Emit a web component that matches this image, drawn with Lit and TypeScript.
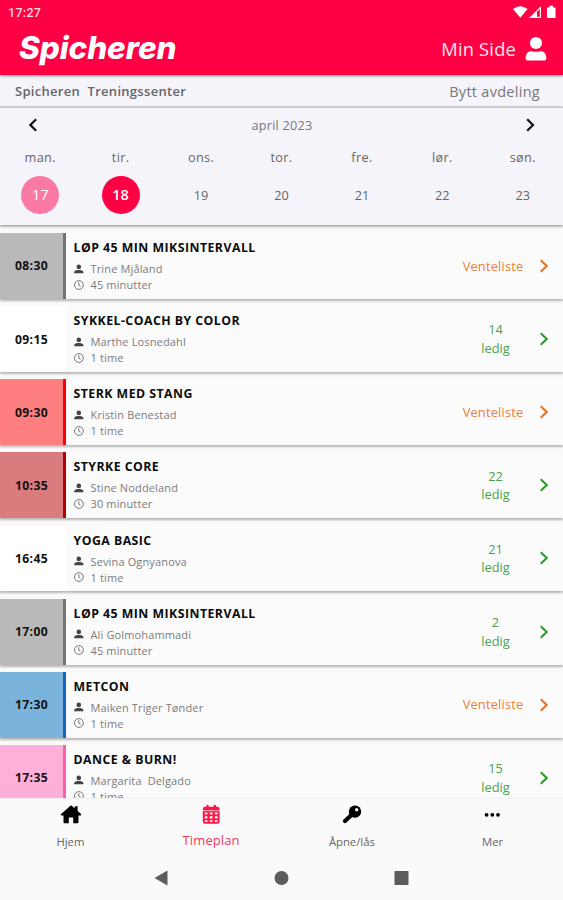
import { LitElement, html, css, svg } from "lit";
import { customElement, property } from "lit/decorators.js";
import { styleMap } from "lit/directives/style-map.js";

interface Session {
  time: string;
  title: string;
  trainer: string;
  length: string;
  free: number;
  fill: string;
  edge: string;
}

const SESSIONS: Session[] = [
  { time: "08:30", title: "LØP 45 MIN MIKSINTERVALL", trainer: "Trine Mjåland", length: "45 minutter", free: 0, fill: "#b9b9b9", edge: "#747474" },
  { time: "09:15", title: "SYKKEL-COACH BY COLOR", trainer: "Marthe Losnedahl", length: "1 time", free: 14, fill: "#ffffff", edge: "#ffffff" },
  { time: "09:30", title: "STERK MED STANG", trainer: "Kristin Benestad", length: "1 time", free: 0, fill: "#ff7f80", edge: "#fb0007" },
  { time: "10:35", title: "STYRKE CORE", trainer: "Stine Noddeland", length: "30 minutter", free: 22, fill: "#da7b7d", edge: "#b50006" },
  { time: "16:45", title: "YOGA BASIC", trainer: "Sevina Ognyanova", length: "1 time", free: 21, fill: "#ffffff", edge: "#ffffff" },
  { time: "17:00", title: "LØP 45 MIN MIKSINTERVALL", trainer: "Ali Golmohammadi", length: "45 minutter", free: 2, fill: "#b9b9b9", edge: "#747474" },
  { time: "17:30", title: "METCON", trainer: "Maiken Triger Tønder", length: "1 time", free: 0, fill: "#7ab4dc", edge: "#1565c0" },
  { time: "17:35", title: "DANCE & BURN!", trainer: "Margarita  Delgado", length: "1 time", free: 15, fill: "#ffafd8", edge: "#ff5cac" },
];

const DAYS = [
  ["man.", "17", "today"],
  ["tir.", "18", "selected"],
  ["ons.", "19", ""],
  ["tor.", "20", ""],
  ["fre.", "21", ""],
  ["lør.", "22", ""],
  ["søn.", "23", ""],
];

@customElement("session-row")
export class SessionRow extends LitElement {
  @property({ attribute: false }) session!: Session;

  static styles = css`
    :host {
      display: flex;
      height: 65.8px;
      flex: none;
      background: #fbfbfb;
      box-shadow: 0 1.5px 2px rgba(0, 0, 0, 0.27);
    }
    .time {
      box-sizing: border-box;
      width: 66px;
      border-right: 3.5px solid;
      display: flex;
      align-items: center;
      justify-content: center;
      font-size: 12.2px;
      font-weight: 700;
      color: #111;
      letter-spacing: 0.35px;
    }
    .info {
      flex: 1;
      padding: 6px 0 0 7.5px;
    }
    .title {
      font-size: 12.3px;
      line-height: 17px;
      font-weight: 700;
      color: #0c0c0c;
      letter-spacing: 0.47px;
    }
    .line {
      display: flex;
      align-items: center;
      height: 16px;
      font-size: 11px;
      color: #7c7c7c;
      gap: 7px;
      letter-spacing: 0.14px;
    }
    .line span { white-space: pre; }
    .first { margin-top: 4.5px; }
    .line svg {
      width: 10px;
      height: 10px;
      flex: none;
    }
    .status {
      box-sizing: border-box;
      width: 87px;
      display: flex;
      align-items: center;
      justify-content: center;
      text-align: center;
      font-size: 12.8px;
      line-height: 18.7px;
    }
    .free { color: #4aa14e; }
    .wait { color: #ee7d36; padding-right: 5px; letter-spacing: 0.2px; }
    .arrow {
      align-self: center;
      width: 9px;
      height: 14px;
      margin-right: 15px;
    }
  `;

  render() {
    const s = this.session;
    const open = s.free > 0;
    return html`
      <div class="time" style=${styleMap({ background: s.fill, borderColor: s.edge })}>${s.time}</div>
      <div class="info">
        <div class="title">${s.title}</div>
        <div class="line first">
          <svg viewBox="0 0 10 10" fill="#444"><circle cx="4.800" cy="2.900" r="2.300" /><path d="M.2 9.300V8.200C.2 6.600 3 6 4.800 6s4.600.6 4.600 2.200v1.100z" /></svg>
          <span>${s.trainer}</span>
        </div>
        <div class="line">
          <svg viewBox="0 0 10 10" fill="none" stroke="#777" stroke-width="1"><circle cx="4.900" cy="5" r="4.400" /><path d="M4.800 2.200V5.200L6.600 6.300" /></svg>
          <span>${s.length}</span>
        </div>
      </div>
      <div class="status ${open ? "free" : "wait"}">
        ${open ? html`<span>${s.free}<br />ledig</span>` : html`<span>Venteliste</span>`}
      </div>
      <svg class="arrow" viewBox="0 0 9 14" fill="none" stroke=${open ? "#279a2b" : "#ee701f"} stroke-width="2"><path d="M1.700 1.200L7.700 7L1.700 12.800" /></svg>
    `;
  }
}

@customElement("app-root")
export class AppRoot extends LitElement {
  static styles = css`
    :host {
      display: flex;
      flex-direction: column;
      height: 900px;
      overflow: hidden;
      background: #fafafa;
      font-family: "Open Sans", "Noto Sans", sans-serif;
      color: #666;
    }
    .header {
      height: 75px;
      flex: none;
      background: #ff0045;
      color: #fff;
      box-shadow: 0 1px 3px rgba(0, 0, 0, 0.4);
      position: relative;
      z-index: 1;
    }
    .status {
      display: flex;
      justify-content: space-between;
      height: 24px;
      padding: 0 7px 0 8px;
      align-items: center;
      font: 500 12.5px Roboto, sans-serif;
      letter-spacing: 0.3px;
      color: #ffd9e3;
    }
    .status svg { width: 43px; height: 14px; }
    .brand {
      display: flex;
      justify-content: space-between;
      align-items: center;
      height: 50px;
      padding: 0 16px 0 19px;
    }
    .logo {
      font: italic 800 31.5px/40px Inter, sans-serif;
      letter-spacing: -0.1px;
      margin-top: -3px;
    }
    .me {
      display: flex;
      align-items: center;
      gap: 9px;
      font-size: 18.3px;
      letter-spacing: 0.2px;
      color: #ffe3ea;
      margin-top: -1px;
    }
    .me svg { width: 22px; height: 25px; }
    .place {
      height: 30px;
      flex: none;
      display: flex;
      justify-content: space-between;
      align-items: center;
      padding: 1px 23px 0 15px;
      background: #f5f4fa;
      border-bottom: 2px solid #d8d8de;
      box-sizing: content-box;
      white-space: pre;
    }
    .center { font-size: 13px; font-weight: 600; color: #65656a; letter-spacing: 0.3px; }
    .switch { font-size: 14.5px; color: #77777b; letter-spacing: 0.28px; }
    .calendar {
      height: 117px;
      flex: none;
      background: #f5f4fa;
      box-shadow: 0 1px 3px rgba(0, 0, 0, 0.5);
    }
    .month {
      display: flex;
      justify-content: space-between;
      align-items: center;
      height: 34px;
      padding: 0 28px 0 29px;
      font-size: 12.7px;
      letter-spacing: 0.25px;
      color: #77777b;
    }
    .month svg { width: 9px; height: 14px; }
    .days {
      display: grid;
      grid-template-columns: repeat(7, 1fr);
      text-align: center;
      font-size: 12.7px;
    }
    .day { display: flex; flex-direction: column; align-items: center; }
    .name { line-height: 18px; margin-top: 6px; letter-spacing: 0.35px; }
    .num {
      width: 38px;
      height: 38px;
      line-height: 38px;
      border-radius: 50%;
      margin-top: 10px;
    }
    .today { background: #fa7aa3; color: #fff; font-size: 14.5px; }
    .selected { background: #ff0045; color: #fff; font-size: 14.5px; font-weight: 600; }
    .list {
      flex: 1;
      min-height: 0;
      overflow: hidden;
      display: flex;
      flex-direction: column;
      gap: 7.35px;
      padding-top: 8px;
    }
    .tabs {
      height: 60px;
      flex: none;
      display: grid;
      grid-template-columns: repeat(4, 1fr);
      background: #fafafa;
      border-top: 1px solid #eee;
      box-sizing: border-box;
      position: relative;
    }
    .tab {
      display: flex;
      flex-direction: column;
      align-items: center;
      padding-top: 5px;
      font-size: 11.3px;
    }
    .tab svg { width: 22px; height: 22px; }
    .label { line-height: 16px; margin-top: 8px; }
    .active { color: #f23a60; font-size: 13px; }
    .active .label { margin-top: 6px; letter-spacing: 0.1px; }
    .system {
      height: 42px;
      flex: none;
      display: flex;
      justify-content: center;
      gap: 105px;
      padding-top: 12px;
      box-sizing: border-box;
    }
    .system svg { width: 15px; height: 16px; }
  `;

  render() {
    const tabs = [
      ["Hjem", svg`<path fill="#000" d="M12 1.200L1.900 10.200q-.6 1 .5 1.200H4.500V18.300q0 1 1 1H9.800V13.500h4.400v5.800h4.300q1 0 1-1V11.400h2.100q1.100-.2.500-1.200L18.600 6.700V2.300h-2.800v2z"/>`, ""],
      ["Timeplan", svg`<rect x="2.800" y="2.800" width="16.800" height="17" rx="2.200" fill="#fb1746"/><path stroke="#fb1746" stroke-width="2.400" stroke-linecap="round" d="M7.500 2v3M14.800 2v3"/><path stroke="#fafafa" stroke-width=".7" d="M3 6.700H19.500"/><g fill="#fafafa"><path d="M4.800 8.500h2.600v2H4.800zM9.800 8.500h2.700v2H9.800zM14.900 8.500h2.600v2h-2.600zM4.800 12.300h2.600v2.200H4.800zM9.800 12.300h2.700v2.200H9.800zM14.900 12.300h2.600v2.200h-2.600zM4.800 16.300h2.600v1.800H4.800zM9.800 16.300h2.700v1.800H9.800zM14.900 16.300h2.600v1.800h-2.600z"/></g>`, "active"],
      ["Åpne/lås", svg`<path stroke="#000" stroke-width="4.200" stroke-linecap="round" d="M11 10.500L4 17"/><circle cx="14" cy="7.600" r="6.200" fill="#000"/><circle cx="15.700" cy="5.800" r="1.700" fill="#fafafa"/>`, ""],
      ["Mer", svg`<g fill="#000"><circle cx="4.600" cy="10.800" r="1.900"/><circle cx="10.300" cy="10.800" r="1.900"/><circle cx="16" cy="10.800" r="1.900"/></g>`, ""],
    ] as const;
    return html`
      <div class="header">
        <div class="status">
          <span>17:27</span>
          <svg viewBox="0 0 43 14" fill="#fff"><path d="M0 3.900Q7.300-1.600 14.600 3.900L7.300 12.700z" /><path d="M16 13L28 1.200V13z" /><path d="M24 6.800L26.800 4.200V11.700H24z" fill="#ff0045" /><path d="M34 2.400h2.500V.700h3.500v1.700H42.500V13H34z" /></svg>
        </div>
        <div class="brand">
          <span class="logo">Spicheren</span>
          <span class="me">Min Side
            <svg viewBox="0 0 22 25" fill="#fff"><circle cx="11" cy="7" r="6.100" /><path d="M.6 22.600C.6 17.600 3 15.200 6.500 15.200q4.500 1.300 9 0c3.500 0 5.900 2.400 5.900 7.400q0 1.800-1.700 1.800H2.300Q.6 24.400.6 22.600z" /></svg>
          </span>
        </div>
      </div>
      <div class="place"><span class="center">Spicheren  Treningssenter</span><span class="switch">Bytt avdeling</span></div>
      <div class="calendar">
        <div class="month">
          <svg viewBox="0 0 9 14" fill="none" stroke="#111" stroke-width="2.200"><path d="M7.200 1.200L1.400 7L7.200 12.800" /></svg>
          <span>april 2023</span>
          <svg viewBox="0 0 9 14" fill="none" stroke="#111" stroke-width="2.200"><path d="M1.200 1.200L7 7L1.200 12.800" /></svg>
        </div>
        <div class="days">
          ${DAYS.map(([name, num, state]) => html`<div class="day"><span class="name">${name}</span><span class="num ${state}">${num}</span></div>`)}
        </div>
      </div>
      <div class="list">${SESSIONS.map((s) => html`<session-row .session=${s}></session-row>`)}</div>
      <div class="tabs">
        ${tabs.map(([label, icon, state]) => html`<div class="tab ${state}"><svg viewBox="0 0 22 22">${icon}</svg><span class="label">${label}</span></div>`)}
      </div>
      <div class="system">
        <svg viewBox="0 0 15 16" fill="#5c5c5c"><path d="M.5 8L13.500 .5V15.500z" /></svg>
        <svg viewBox="0 0 15 16" fill="#5c5c5c"><circle cx="7.500" cy="8" r="7" /></svg>
        <svg viewBox="0 0 15 16" fill="#5c5c5c"><rect x=".5" y="1" width="14" height="14" /></svg>
      </div>
    `;
  }
}
